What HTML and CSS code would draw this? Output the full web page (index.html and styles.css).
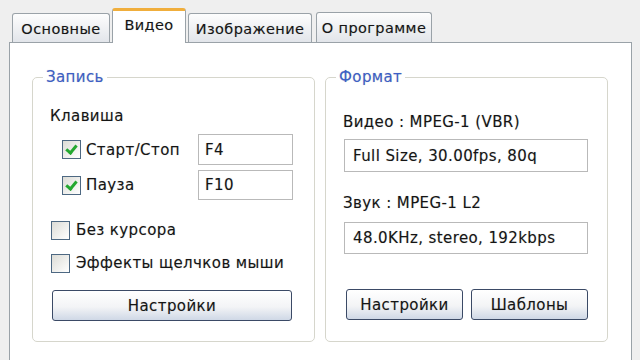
FILE: index.html
```html
<!DOCTYPE html>
<html>
<head>
    <title>Видео</title>
    <link rel="stylesheet" href="styles.css">
</head>
<body>
    <div class="tabs">
        <div class="tab tab-main">Основные</div>
        <div class="tab tab-video active">Видео</div>
        <div class="tab tab-image">Изображение</div>
        <div class="tab tab-about">О программе</div>
    </div>

    <div class="panel">
        <fieldset class="group group-record">
            <legend>Запись</legend>
            <div class="caption">Клавиша</div>

            <div class="hotkey-row">
                <label class="check"><span class="box checked"></span>Старт/Стоп</label>
                <input type="text" class="field hotkey" value="F4">
            </div>
            <div class="hotkey-row row-pause">
                <label class="check"><span class="box checked"></span>Пауза</label>
                <input type="text" class="field hotkey" value="F10">
            </div>

            <label class="check option first-option"><span class="box"></span>Без курсора</label>
            <label class="check option"><span class="box"></span>Эффекты щелчков мыши</label>

            <button class="btn btn-wide">Настройки</button>
        </fieldset>

        <fieldset class="group group-format">
            <legend>Формат</legend>
            <div class="caption format-caption">Видео : MPEG-1 (VBR)</div>
            <input type="text" class="field format-field" value="Full Size, 30.00fps, 80q">
            <div class="caption format-caption audio-caption">Звук : MPEG-1 L2</div>
            <input type="text" class="field format-field audio-field" value="48.0KHz, stereo, 192kbps">

            <div class="buttons">
                <button class="btn">Настройки</button>
                <button class="btn">Шаблоны</button>
            </div>
        </fieldset>
    </div>
</body>
</html>
```

FILE: styles.css
```css
body {
    margin: 0;
    padding: 8px 0 0 0;
    background-color: #efefef;
    font-family: "DejaVu Sans", Verdana, sans-serif;
    font-size: 15px;
    line-height: 18px;
    letter-spacing: 0.4px;
    color: #151515;
    text-shadow: 0 0 1px rgba(0, 0, 0, 0.25);
    overflow: hidden;
}
.tabs {
    display: flex;
    align-items: flex-end;
    gap: 2px;
    padding-left: 12px;
    height: 34px;
}
.tab {
    box-sizing: border-box;
    height: 29px;
    border: 1px solid #9aa2a8;
    border-bottom: none;
    border-radius: 3px 3px 0 0;
    background: linear-gradient(#fdfdfd, #e2e5ea);
    text-align: center;
    padding-top: 6px;
    font-size: 14.5px;
}
.tab-main { width: 98px; }
.tab-video { width: 74px; }
.tab-image { width: 124px; }
.tab-about { width: 116px; margin-left: 2px; height: 30px; }
.tab.active {
    position: relative;
    z-index: 1;
    height: 35px;
    margin-bottom: -1px;
    background: #ffffff;
    border-top: 3px solid #f0ae3c;
    padding-top: 5px;
}
.panel {
    box-sizing: border-box;
    display: flex;
    gap: 10px;
    margin-left: 9px;
    width: 623px;
    height: 330px;
    padding: 25px 0 0 22px;
    background-color: #ffffff;
    border: 1px solid #9aa2a8;
}
.group {
    box-sizing: border-box;
    width: 283px;
    height: 274px;
    margin: 0;
    padding: 0;
    border: 1px solid #d6d6cc;
    border-radius: 5px;
}
.group legend {
    margin-left: 10px;
    padding: 0 3px;
    color: #3c5fc8;
}
.caption {
    margin: 21px 0 0 17px;
}
.hotkey-row {
    display: flex;
    align-items: center;
    margin-top: 9px;
    height: 31px;
}
.row-pause {
    margin-top: 5px;
    height: 30px;
}
.check {
    display: flex;
    align-items: center;
    gap: 5px;
}
.hotkey-row .check {
    width: 136px;
    margin-left: 29px;
}
.box {
    box-sizing: border-box;
    width: 19px;
    height: 19px;
    border: 1px solid #4d6882;
    background: linear-gradient(135deg, #dcdcd6, #ffffff);
    position: relative;
}
.box.checked::after {
    content: "";
    position: absolute;
    left: 5px;
    top: 2px;
    width: 4px;
    height: 8px;
    border: solid #24a830;
    border-width: 0 3px 3px 0;
    transform: rotate(40deg);
}
.field {
    box-sizing: border-box;
    height: 100%;
    border: 1px solid #b9b9b9;
    background: #ffffff;
    font: inherit;
    letter-spacing: inherit;
    color: #151515;
    text-shadow: inherit;
    padding: 0 6px;
    outline: none;
}
.hotkey {
    width: 95px;
}
.option {
    margin-left: 18px;
    height: 24px;
    gap: 6px;
}
.first-option {
    margin-top: 18px;
}
.option + .option {
    margin-top: 9px;
}
.btn {
    box-sizing: border-box;
    height: 31px;
    border: 1px solid #3b4a66;
    border-radius: 3px;
    background: linear-gradient(#ffffff, #f3f4f6 55%, #cfd8e6);
    font: inherit;
    letter-spacing: inherit;
    color: #151515;
    text-shadow: inherit;
    padding: 0;
}
.btn-wide {
    display: block;
    width: 240px;
    margin: 15px 0 0 19px;
}
.format-caption {
    margin-top: 27px;
}
.audio-caption {
    margin-top: 22px;
}
.format-field {
    display: block;
    width: 244px;
    height: 33px;
    margin: 8px 0 0 18px;
    padding: 0 8px;
}
.audio-field {
    margin-top: 10px;
    height: 32px;
}
.buttons {
    display: flex;
    gap: 8px;
    margin: 35px 0 0 20px;
}
.buttons .btn {
    width: 117px;
}
```
